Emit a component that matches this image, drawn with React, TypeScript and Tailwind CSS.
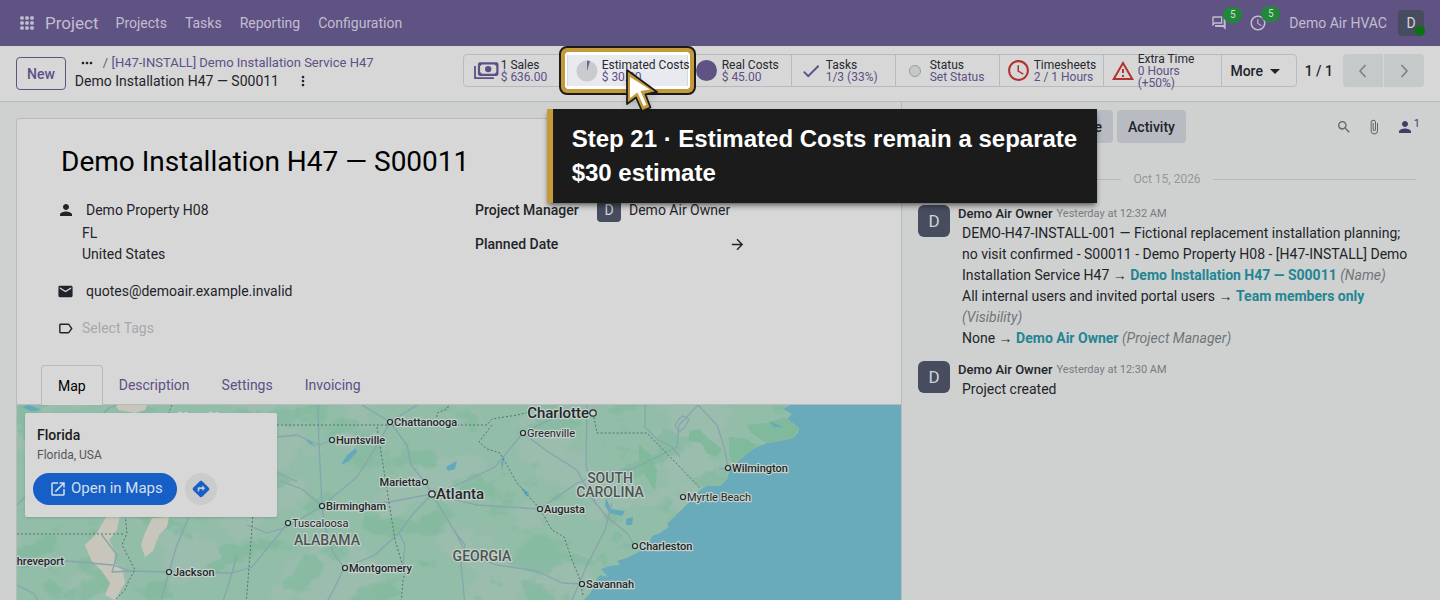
import type { ReactNode } from "react";
import {
  MdAccessTime,
  MdArrowDropDown,
  MdArrowForward,
  MdAttachFile,
  MdCheck,
  MdDirections,
  MdEmail,
  MdLabelOutline,
  MdMoreHoriz,
  MdMoreVert,
  MdOpenInNew,
  MdOutlineQuestionAnswer,
  MdOutlineWarningAmber,
  MdPerson,
  MdSearch,
} from "react-icons/md";

const menuItems = ["Projects", "Tasks", "Reporting", "Configuration"];
const tabs = ["Map", "Description", "Settings", "Invoicing"];

const AppsIcon = () => (
  <svg viewBox="0 0 14 14" className="size-3.5" fill="currentColor">
    {[0, 5, 10].map((y) =>
      [0, 5, 10].map((x) => (
        <rect key={`${x}-${y}`} x={x + 0.2} y={y + 0.2} width="3.6" height="3.6" rx="1.3" />
      ))
    )}
  </svg>
);

const MoneyIcon = () => (
  <svg viewBox="0 0 26 18" className="h-[18px] w-[26px] shrink-0" fill="none" stroke="currentColor">
    <path d="M2 4V16.2H21" strokeWidth="1.8" strokeLinejoin="round" />
    <rect x="6" y="1.4" width="18.4" height="11.4" rx="1" strokeWidth="2.2" />
    <path
      d="M6 1.4h3.4L6 4.8ZM24.4 1.4H21l3.4 3.4ZM6 12.8h3.4L6 9.4ZM24.4 12.8H21l3.4-3.4Z"
      fill="currentColor"
      strokeWidth="0.8"
    />
    <circle cx="15.2" cy="7.1" r="3.2" fill="currentColor" stroke="none" />
  </svg>
);

const PieIcon = () => (
  <svg viewBox="0 0 22 22" className="size-[22px]">
    <circle cx="11" cy="11" r="10.5" fill="#c9cbcd" />
    <path d="M11 11V0.5A10.5 10.5 0 0 1 14 0.9Z" fill="#6f6296" />
  </svg>
);

const Chevron = ({ d }: { d: string }) => (
  <svg viewBox="0 0 16 16" className="size-4" fill="none" stroke="#7c8082" strokeWidth="1.6">
    <path d={d} />
  </svg>
);

const Navbar = () => (
  <header className="flex h-[46px] shrink-0 items-center bg-[#5f5384] pr-4 pl-5 text-[#c3bdd0]">
    <button aria-label="Apps">
      <AppsIcon />
    </button>
    <a href="#" className="ml-[11px] text-[17px]">
      Project
    </a>
    <nav className="ml-2 flex">
      {menuItems.map((item) => (
        <a key={item} href="#" className="px-[9px]">
          {item}
        </a>
      ))}
    </nav>
    <div className="ml-auto flex items-center">
      <button aria-label="Messages" className="relative mr-[22px]">
        <MdOutlineQuestionAnswer className="size-4" />
        <Badge />
      </button>
      <button aria-label="Activities" className="relative mr-[22px]">
        <MdAccessTime className="size-[18px]" />
        <Badge />
      </button>
      <a href="#">Demo Air HVAC</a>
      <div className="relative ml-[11px] flex size-[26px] items-center justify-center rounded bg-[#474c5f] text-[#d3d4da]">
        D
        <span className="absolute -right-px bottom-0 size-2.5 rounded-full bg-[#08740f]" />
      </div>
    </div>
  </header>
);

const Badge = () => (
  <span className="absolute -top-2 left-3 flex h-4 w-[19px] items-center justify-center rounded-full bg-[#22873a] text-[10px] text-[#cfe0d2]">
    5
  </span>
);

const Stat = ({
  icon,
  label,
  value,
  className = "w-[104px] pl-2",
}: {
  icon: ReactNode;
  label: string;
  value: string;
  className?: string;
}) => (
  <button
    className={`flex items-center gap-1 border-r border-[#b8bbbd] text-left text-xs leading-3 text-[#26292e] ${className}`}
  >
    <span className="flex w-[22px] shrink-0 justify-center text-[#5d5087]">{icon}</span>
    <span>
      <span className="block whitespace-nowrap">{label}</span>
      <span className="block text-[#5d5087]">{value}</span>
    </span>
  </button>
);

const Pointer = () => (
  <svg
    viewBox="0 0 36 46"
    className="absolute top-3 left-[55px] z-40 h-[46px] w-9 drop-shadow-md"
    strokeLinejoin="round"
  >
    <path d="M5 3V37L14 30.5L20 44L28.500 40.500L23.500 27.500L35 25Z" fill="#c49a3a" stroke="#1b1b1b" strokeWidth="1.8" />
    <path d="M8 10V31L15.500 25.500L21.500 39L24.500 38L18.500 24L28 22.500Z" fill="#fff" />
  </svg>
);

// The stat that the tour points at, with its frame, pointer and caption
const HighlightedStat = () => (
  <div className="relative z-20 flex">
    <span className="absolute -inset-x-2 -inset-y-[9px] rounded-lg border-[6px] border-[#1b1b1b] bg-white" />
    <span className="absolute -inset-x-1.5 -inset-y-[7px] rounded-md border-4 border-[#c49a3a]" />
    <Stat
      icon={<PieIcon />}
      label="Estimated Costs"
      value="$ 30.00"
      className="relative w-[121px] border-l border-[#d3d8dd] bg-[#e8eaef] pl-2"
    />
    <Pointer />
    <div
      role="tooltip"
      className="absolute top-[54px] -left-5 z-30 w-[550px] border-l-6 border-[#c49a3a] bg-[#1b1b1b] px-[19px] py-[13px] font-['Liberation_Sans',sans-serif] text-2xl leading-[34px] font-bold whitespace-normal text-white shadow-md shadow-black/40"
    >
      Step 21 · Estimated Costs remain a separate $30 estimate
    </div>
  </div>
);

const ControlPanel = () => (
  <div className="flex shrink-0 items-start border-b border-[#b8bbbc] bg-[#d7d7d7] px-4 pt-2 pb-[11px] whitespace-nowrap">
    <button className="mt-[3px] h-[33px] rounded border border-[#5f5384] px-2.5 font-medium text-[#5d5087]">
      New
    </button>
    <div className="ml-[9px] leading-[18px]">
      <div className="flex items-center gap-2">
        <button aria-label="More breadcrumbs" className="ml-1">
          <MdMoreHoriz className="size-4 text-[#1b1f24]" />
        </button>
        <span className="text-[13px] text-[#5b5f66]">
          /{" "}
          <a href="#" className="text-[#5d5087]">
            [H47-INSTALL] Demo Installation Service H47
          </a>
        </span>
      </div>
      <div className="flex items-center">
        Demo Installation H47 — S00011
        <button aria-label="Actions" className="ml-4">
          <MdMoreVert className="size-4" />
        </button>
      </div>
    </div>
    <div className="ml-auto flex h-[33px] rounded border border-[#b8bbbd]">
      <Stat icon={<MoneyIcon />} label="1 Sales" value="$ 636.00" className="w-[103px] border-r-0 pl-[11px]" />
      <HighlightedStat />
      <Stat
        icon={<span className="size-[21px] rounded-full bg-[#5f5384]" />}
        label="Real Costs"
        value="$ 45.00"
      />
      <Stat icon={<MdCheck className="size-[22px]" />} label="Tasks" value="1/3 (33%)" />
      <Stat
        icon={<span className="size-3 rounded-full border border-[#9a9da0] bg-[#c6c9c9]" />}
        label="Status"
        value="Set Status"
      />
      <Stat
        icon={<MdAccessTime className="size-[25px] shrink-0 text-[#b3332f]" />}
        label="Timesheets"
        value="2 / 1 Hours"
      />
      <Stat
        icon={<MdOutlineWarningAmber className="size-6 shrink-0 text-[#b3332f]" />}
        label="Extra Time"
        value="0 Hours (+50%)"
        className="w-[118px] pr-8 pl-2 whitespace-normal"
      />
      <button className="flex w-[74px] items-center justify-center font-medium">
        More <MdArrowDropDown className="size-6" />
      </button>
    </div>
    <div className="ml-2 flex h-[33px] items-center font-medium">
      1 / 1
      <button aria-label="Previous" className="ml-2.5 flex h-full w-10 items-center justify-center rounded-l bg-[#c6c9ca]">
        <Chevron d="M10.500 2L5 8L10.500 14" />
      </button>
      <button aria-label="Next" className="ml-px flex h-full w-10 items-center justify-center rounded-r bg-[#c6c9ca]">
        <Chevron d="M5.500 2L11 8L5.500 14" />
      </button>
    </div>
  </div>
);

const cities: { name: string; x: number; y: number; left?: boolean; size?: number; weight?: number }[] = [
  { name: "Chattanooga", x: 373, y: 17 },
  { name: "Huntsville", x: 315, y: 35 },
  { name: "Charlotte", x: 576, y: 8, left: true, size: 15 },
  { name: "Greenville", x: 506, y: 28, weight: 400 },
  { name: "Marietta", x: 408, y: 77, left: true },
  { name: "Atlanta", x: 415, y: 89, size: 15 },
  { name: "Birmingham", x: 305, y: 101 },
  { name: "Tuscaloosa", x: 271, y: 118, weight: 400 },
  { name: "Montgomery", x: 328, y: 163 },
  { name: "Augusta", x: 523, y: 104 },
  { name: "Wilmington", x: 711, y: 63 },
  { name: "Myrtle Beach", x: 666, y: 92, weight: 400 },
  { name: "Charleston", x: 618, y: 141 },
  { name: "Savannah", x: 565, y: 179 },
  { name: "Jackson", x: 152, y: 167 },
  { name: "Memphis", x: 157, y: 12 },
  { name: "Shreveport", x: 51, y: 156, left: true },
];

const states = [
  { name: "ALABAMA", x: 310, y: 140 },
  { name: "GEORGIA", x: 465, y: 156 },
  { name: "SOUTH", x: 593, y: 78 },
  { name: "CAROLINA", x: 593, y: 92 },
];

const coast =
  "M0 0H773L766 4L775 9L770 14L776 18L782 23L781 28L776 33L763 36L750 38L736 44L720 57L713 64L710 74L703 81L690 81L683 85L670 99L663 106L655 114L650 119L652 122L643 128L635 131L633 136L628 143L620 148L610 153L600 156L603 160L593 161L584 164L591 172L583 170L579 176L582 181L576 183L572 190L564 197L560 900H0Z";

const roads = [
  "M301 0L302 40L305 101L308 122L316 147L327 163L316 186L305 205",
  "M230 120L250 128L270 122L305 101L340 72L362 37L373 17L400 0",
  "M263 76L285 84L305 101L340 100L372 97L415 89L440 80L478 62L506 28L526 18L545 10L576 8",
  "M345 0L373 17L390 40L394 60L408 77L415 89L438 127L448 140L444 160L448 200",
  "M415 89L395 110L382 128L358 150L327 163",
  "M415 89L460 100L523 104L560 78L585 68L615 64L640 52L660 42L662 20L681 0",
  "M506 28L530 46L560 65L576 95L590 112L610 128L618 141",
  "M570 0L569 60L578 98",
  "M595 98L588 125L570 160L553 200",
  "M681 0L700 20L708 45L711 63L702 64",
  "M628 0L628 22L640 34L655 42L663 52",
  "M438 127L450 150L480 160L520 166L545 178L565 179",
  "M-4 156L40 155L95 160L115 166L152 167L215 168L235 162L271 118",
  "M115 166L95 167L100 150L85 130",
  "M143 200L152 167L160 140L172 112",
  "M205 200L215 168L220 150",
  "M0 180L16 188L24 200",
  "M80 14L92 3L100 0",
  "M260 32L280 30L302 40L315 35",
  "M260 68L280 76",
  "M0 100L10 90",
  "M382 128L388 140L386 160",
  "M662 14L658 20L662 27L668 22L672 14L666 11Z",
];

const borders = [
  "M260 20H470L475 14L500 10L520 5",
  "M420 20V8L430 4L432 0",
  "M475 20L462 37L470 44L483 48L500 78L515 95L523 104L535 125L547 132L555 155L562 172L566 190",
  "M360 22L370 85L378 135L388 168L386 175L384 200",
  "M576 8L580 28H630L683 83",
  "M0 129H107",
  "M155 0L150 12L130 60L108 110L110 128L105 140L118 165L112 175L108 185L98 195",
  "M236 108L233 150L229 200",
];

const RegionMap = () => (
  <svg className="h-full w-full font-[Roboto,sans-serif]" role="img" aria-label="Map of the south-eastern United States">
    <defs>
      <clipPath id="land">
        <path d={coast} />
      </clipPath>
      <filter id="plains" x="0" y="0" width="100%" height="100%" colorInterpolationFilters="sRGB">
        <feTurbulence type="fractalNoise" baseFrequency="0.014 0.020" numOctaves="4" seed="4" />
        <feColorMatrix values="0 0 0 0 0.62  0 0 0 0 0.74  0 0 0 0 0.69  9 0 0 0 -4.300" />
      </filter>
      <filter id="woods" x="0" y="0" width="100%" height="100%" colorInterpolationFilters="sRGB">
        <feTurbulence type="fractalNoise" baseFrequency="0.022 0.030" numOctaves="4" seed="11" />
        <feColorMatrix values="0 0 0 0 0.51  0 0 0 0 0.73  0 0 0 0 0.62  14 0 0 0 -8" />
      </filter>
    </defs>
    <rect width="100%" height="100%" fill="#69abba" />
    <g clipPath="url(#land)">
      <rect width="900" height="900" fill="#92bda8" />
      <rect width="900" height="900" filter="url(#plains)" opacity="0.8" />
      <rect width="900" height="900" filter="url(#woods)" opacity="0.7" />
      <g fill="#81b99c">
        <path d="M672 26L682 24L692 34L705 44L700 52L690 48L684 38L672 36Z" />
        <path d="M712 32L730 34L738 40L730 50L716 58L712 48Z" />
        <path d="M730 20L750 18L768 12L782 23L776 33L750 38L734 28Z" />
        <path d="M622 40L632 48L640 65L638 86L628 70L622 54Z" />
      </g>
      <g fill="#c8c6ba">
        <path d="M89 112L103 110L100 125L92 135L98 146L97 158L106 166L108 178L98 195L88 190L93 178L84 165L74 155L68 140L80 128Z" />
        <path d="M128 128L135 113L152 112L150 122L142 130L136 146L128 152L124 140Z" />
        <path d="M98 0H130L128 5L118 8L102 5Z" />
      </g>
      <g fill="#62a9bd">
        <path d="M325 58L330 50L339 43L340 47L332 56L326 59Z" />
        <path d="M429 62L436 58L440 56L438 64L431 66Z" />
        <path d="M286 32L294 37L299 42L293 39Z" />
        <path d="M484 58L488 48L485 66Z" />
        <path d="M504 82L512 88L509 92Z" />
        <path d="M589 93L594 104L608 106L605 111L592 108L588 100Z" />
        <path d="M609 114L616 112L615 120L609 120Z" />
        <path d="M12 0L25 5L14 6L5 2Z" />
        <path d="M752 16L766 22L757 22Z" />
      </g>
      <g fill="none" stroke="#87a5ae" strokeWidth="1.300" strokeLinejoin="round">
        {roads.map((d) => (
          <path key={d} d={d} />
        ))}
      </g>
      <g fill="none" stroke="#58726a" strokeWidth="1" strokeDasharray="2 2">
        {borders.map((d) => (
          <path key={d} d={d} />
        ))}
      </g>
    </g>
    <g stroke="#c3d1ca" strokeWidth="2.500" strokeLinejoin="round" paintOrder="stroke">
      {states.map((s) => (
        <text key={s.name} x={s.x} y={s.y} textAnchor="middle" fontSize="14" fontWeight="500" fill="#4b5552">
          {s.name}
        </text>
      ))}
      {cities.map(({ name, x, y, left, size = 11, weight = 500 }) => (
        <text
          key={name}
          x={left ? x - 4 : x + 4}
          y={y + (size > 11 ? 5 : 4)}
          textAnchor={left ? "end" : "start"}
          fontSize={size}
          fontWeight={weight}
          fill="#22282a"
        >
          {name}
        </text>
      ))}
    </g>
    <g fill="#c3d1ca" stroke="#22282a" strokeWidth="1.200">
      {cities.slice(0, 15).map(({ name, x, y, size }) => (
        <circle key={name} cx={x} cy={y} r={size ? 3.2 : 2.5} />
      ))}
    </g>
  </svg>
);

const MapCard = () => (
  <div className="absolute top-2 left-2 w-[252px] rounded-xs bg-[#d7d7d7] px-2 py-3 shadow-sm">
    <h3 className="px-1 leading-5 font-medium text-[#1b1b1b]">Florida</h3>
    <p className="px-1 text-xs leading-5 text-[#54585a]">Florida, USA</p>
    <div className="mt-2 flex items-center gap-2">
      <a href="#" className="flex h-8 items-center gap-1 rounded-full bg-[#155fc6] pr-3.5 pl-4 text-[15px] text-[#d5dfec]">
        <MdOpenInNew className="size-[18px]" />
        Open in Maps
      </a>
      <button aria-label="Directions" className="flex size-8 items-center justify-center rounded-full bg-[#cbcbcb]">
        <MdDirections className="size-5 text-[#155fc6]" />
      </button>
    </div>
  </div>
);

const ProjectSheet = () => (
  <main className="flex min-w-0 flex-1 flex-col pt-4 pl-4">
    <div className="flex min-h-0 flex-1 flex-col rounded-tl border-t border-l border-[#b8bbbc] bg-[#d7d7d7]">
      <h1 className="mt-6 pl-11 text-[28px] leading-[38px] text-black">Demo Installation H47 — S00011</h1>
      <div className="mt-4 grid grid-cols-2 pl-10">
        <div>
          <div className="flex h-[26px] items-center">
            <MdPerson className="size-[18px]" />
            <a href="#" className="ml-[11px]">
              Demo Property H08
            </a>
          </div>
          <address className="pl-[25px] leading-[21px] not-italic">
            FL
            <br />
            United States
          </address>
          <div className="mt-2 flex h-9 items-center">
            <MdEmail className="size-[17px]" />
            <a href="#" className="ml-3">
              quotes@demoair.example.invalid
            </a>
          </div>
          <div className="flex h-[38px] items-center">
            <label htmlFor="tags">
              <MdLabelOutline className="size-[17px]" aria-label="Tags" />
            </label>
            <input
              id="tags"
              placeholder="Select Tags"
              className="ml-2 bg-transparent outline-none placeholder:text-[#a6a9ac]"
            />
          </div>
        </div>
        <div className="-ml-1">
          <div className="flex h-[26px] items-center">
            <span className="w-[122px] font-medium">Project Manager</span>
            <span className="flex size-6 items-center justify-center rounded bg-[#474c5f] text-[#d3d4da]">D</span>
            <span className="ml-2">Demo Air Owner</span>
          </div>
          <div className="mt-2 flex h-[26px] items-center">
            <span className="w-[254px] font-medium">Planned Date</span>
            <MdArrowForward className="size-[17px]" />
          </div>
        </div>
      </div>
      <div role="tablist" className="mt-[18px] flex border-b border-[#b8bbbc] pl-6">
        {tabs.map((tab, i) => (
          <button
            key={tab}
            role="tab"
            aria-selected={i === 0}
            className={
              i === 0
                ? "-mb-px h-10 rounded-t border border-b-0 border-[#b8bbbc] bg-[#d7d7d7] px-4 text-black"
                : "h-[39px] px-4 text-[#5d5087]"
            }
          >
            {tab}
          </button>
        ))}
      </div>
      <div className="relative min-h-0 flex-1 overflow-hidden">
        <RegionMap />
        <MapCard />
      </div>
    </div>
  </main>
);

const Message = ({ time, children }: { time: string; children: ReactNode }) => (
  <article className="mb-3 flex gap-2 pr-2">
    <span className="flex size-8 shrink-0 items-center justify-center rounded-md bg-[#474c5f] text-[17px] text-[#d3d4da]">
      D
    </span>
    <div>
      <div className="flex h-[18px] items-center gap-1">
        <strong className="text-[13px] font-medium">Demo Air Owner</strong>
        <time className="text-[11px] text-[#777c80]">{time}</time>
      </div>
      <div className="pl-1 leading-[21px]">{children}</div>
    </div>
  </article>
);

const Change = ({ from, to, field }: { from: string; to: string; field: string }) => (
  <li>
    {from} → <b className="text-[#238593]">{to}</b> <i className="text-[#707579]">({field})</i>
  </li>
);

const Chatter = () => (
  <aside className="w-[539px] shrink-0 border-l border-[#b8bbbc] pt-2 pr-4 pl-4">
    <div className="flex h-[33px] items-center gap-1">
      {["Send message", "Log note", "Activity"].map((label) => (
        <button key={label} className="h-full rounded bg-[#b8bcc2] px-[11px] font-medium">
          {label}
        </button>
      ))}
      <div className="ml-auto flex items-center gap-3.5 pr-1 text-[#62666b]">
        <button aria-label="Search messages">
          <MdSearch className="size-4" />
        </button>
        <button aria-label="Attach files">
          <MdAttachFile className="size-4" />
        </button>
        <button aria-label="Followers" className="flex items-start text-[#463d66]">
          <MdPerson className="size-[18px]" />
          <span className="text-[11px] leading-3">1</span>
        </button>
      </div>
    </div>
    <div className="mt-[26px] mb-4 flex items-center gap-3 text-xs leading-5 text-[#94989a]">
      <hr className="flex-1 border-[#b8bbbc]" />
      Oct 15, 2026
      <hr className="mr-2 flex-1 border-[#b8bbbc]" />
    </div>
    <Message time="Yesterday at 12:32 AM">
      <ul>
        <Change
          from="DEMO-H47-INSTALL-001 — Fictional replacement installation planning; no visit confirmed - S00011 - Demo Property H08 - [H47-INSTALL] Demo Installation Service H47"
          to="Demo Installation H47 — S00011"
          field="Name"
        />
        <Change from="All internal users and invited portal users" to="Team members only" field="Visibility" />
        <Change from="None" to="Demo Air Owner" field="Project Manager" />
      </ul>
    </Message>
    <Message time="Yesterday at 12:30 AM">Project created</Message>
  </aside>
);

export default function App() {
  return (
    <div className="flex h-screen flex-col overflow-hidden bg-[#ced1d0] font-[Roboto,sans-serif] text-sm text-[#1f242a]">
      <Navbar />
      <ControlPanel />
      <div className="flex min-h-0 flex-1">
        <ProjectSheet />
        <Chatter />
      </div>
    </div>
  );
}
